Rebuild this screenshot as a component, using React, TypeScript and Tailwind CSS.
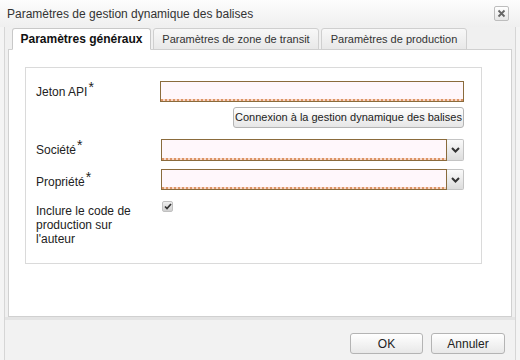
import React from 'react';

// Small dropdown chevron used on the select boxes
const Chevron = () => (
  <svg width="9" height="6" viewBox="0 0 9 6">
    <path d="M1 1 L4.5 4.5 L8 1" fill="none" stroke="#333" strokeWidth="2" />
  </svg>
);

const Required = () => <span className="relative -top-[4px] ml-px text-[14px] leading-none">*</span>;

// Text field with the brown border and the dotted "invalid" strip at the bottom
const Field = ({ width }: { width: string }) => (
  <div className={`${width} h-full flex flex-col border border-[#8a6b3c] bg-[#fff7fb]`}>
    <div className="flex-1" />
    <div className="h-[2px] bg-[repeating-linear-gradient(90deg,#dc9466_0_2px,#f8d8c8_2px_4px)]" />
  </div>
);

const Select = () => (
  <div className="flex h-full">
    <Field width="w-[286px]" />
    <div className="w-[17px] h-full flex items-center justify-center border border-l-0 border-[#c4c4c4] rounded-r-[2px] bg-gradient-to-b from-[#fafafa] to-[#dcdcdc]">
      <Chevron />
    </div>
  </div>
);

export default function App() {
  return (
    <div className="w-[520px] h-[360px] flex flex-col bg-[#f4f4f4] text-[#222] font-['Liberation_Sans',Arial,sans-serif] overflow-hidden">
      {/* title bar */}
      <div className="h-[27px] shrink-0 flex items-center justify-between pl-[7px] pr-[11px] bg-gradient-to-b from-[#fdfdfd] to-[#efefef]">
        <span className="text-[12px] text-[#333]">Paramètres de gestion dynamique des balises</span>
        <button className="w-[15px] h-[15px] flex items-center justify-center border border-[#bdbdbd] rounded-[2px] bg-gradient-to-b from-white to-[#e6e6e6]">
          <svg width="9" height="9" viewBox="0 0 9 9">
            <path d="M1.5 1.5 L7.5 7.5 M7.5 1.5 L1.5 7.5" stroke="#666" strokeWidth="1.8" />
          </svg>
        </button>
      </div>

      <div className="flex-1 flex flex-col mx-[4px] border-x border-[#d6d6d6] bg-[#f0f0f0]">
        {/* tabs */}
        <div className="flex gap-[2px] pl-[7px] pt-px -mb-px relative z-10 text-[11px]">
          <div className="w-[139px] h-[22px] flex items-center justify-center border border-[#c8c8c8] border-b-white rounded-t-[3px] bg-white font-bold text-[12px] text-[#111]">
            Paramètres généraux
          </div>
          <div className="w-[166px] h-[22px] flex items-center justify-center border border-[#cfcfcf] rounded-t-[3px] bg-gradient-to-b from-[#f8f8f8] to-[#e8e8e8] text-[#333]">
            Paramètres de zone de transit
          </div>
          <div className="w-[146px] h-[22px] flex items-center justify-center border border-[#cfcfcf] rounded-t-[3px] bg-gradient-to-b from-[#f8f8f8] to-[#e8e8e8] text-[#333]">
            Paramètres de production
          </div>
        </div>

        {/* tab panel */}
        <div className="h-[268px] mx-[3px] border border-[#d0d0d0] bg-white pt-[17px] pl-[16px]">
          <div className="w-[457px] h-[197px] border border-[#dadada] pt-[13px] pl-[10px] pr-[17px] text-[12px]">
            <div className="flex items-center h-[21px]">
              <div className="w-[124px]">Jeton API<Required /></div>
              <Field width="w-[304px]" />
            </div>
            <div className="flex justify-end mt-[5px]">
              <button className="w-[231px] h-[21px] border border-[#b4b4b4] rounded-[3px] bg-gradient-to-b from-white to-[#e6e6e6] text-[11px] text-[#222]">
                Connexion à la gestion dynamique des balises
              </button>
            </div>
            <div className="flex items-center h-[22px] mt-[11px]">
              <div className="w-[126px]">Société<Required /></div>
              <Select />
            </div>
            <div className="flex items-center h-[21px] mt-[8px]">
              <div className="w-[126px] pt-[4px]">Propriété<Required /></div>
              <Select />
            </div>
            <div className="flex mt-[10px]">
              <div className="w-[126px] pt-[4px] leading-[14px]">
                Inclure le code de
                <br />
                production sur
                <br />
                l'auteur
              </div>
              <div className="w-[11px] h-[11px] mt-px flex items-center justify-center rounded-[2px] border border-[#c0c0c0] bg-gradient-to-b from-[#eeeeee] to-[#d0d0d0]">
                <svg width="8" height="7" viewBox="0 0 8 7">
                  <path d="M1 3.5 L3 5.5 L7 1" fill="none" stroke="#333" strokeWidth="1.7" />
                </svg>
              </div>
            </div>
          </div>
        </div>

        {/* footer */}
        <div className="flex-1 flex justify-end items-start gap-[8px] pt-[13px] pr-[10px] border-t-[3px] border-[#e4e4e4] bg-[#f2f2f2] text-[12px]">
          <button className="w-[73px] h-[21px] border border-[#b4b4b4] rounded-[3px] bg-gradient-to-b from-white to-[#e8e8e8] text-[#222]">OK</button>
          <button className="w-[74px] h-[21px] border border-[#b4b4b4] rounded-[3px] bg-gradient-to-b from-white to-[#e8e8e8] text-[#222]">Annuler</button>
        </div>
      </div>
    </div>
  );
}
